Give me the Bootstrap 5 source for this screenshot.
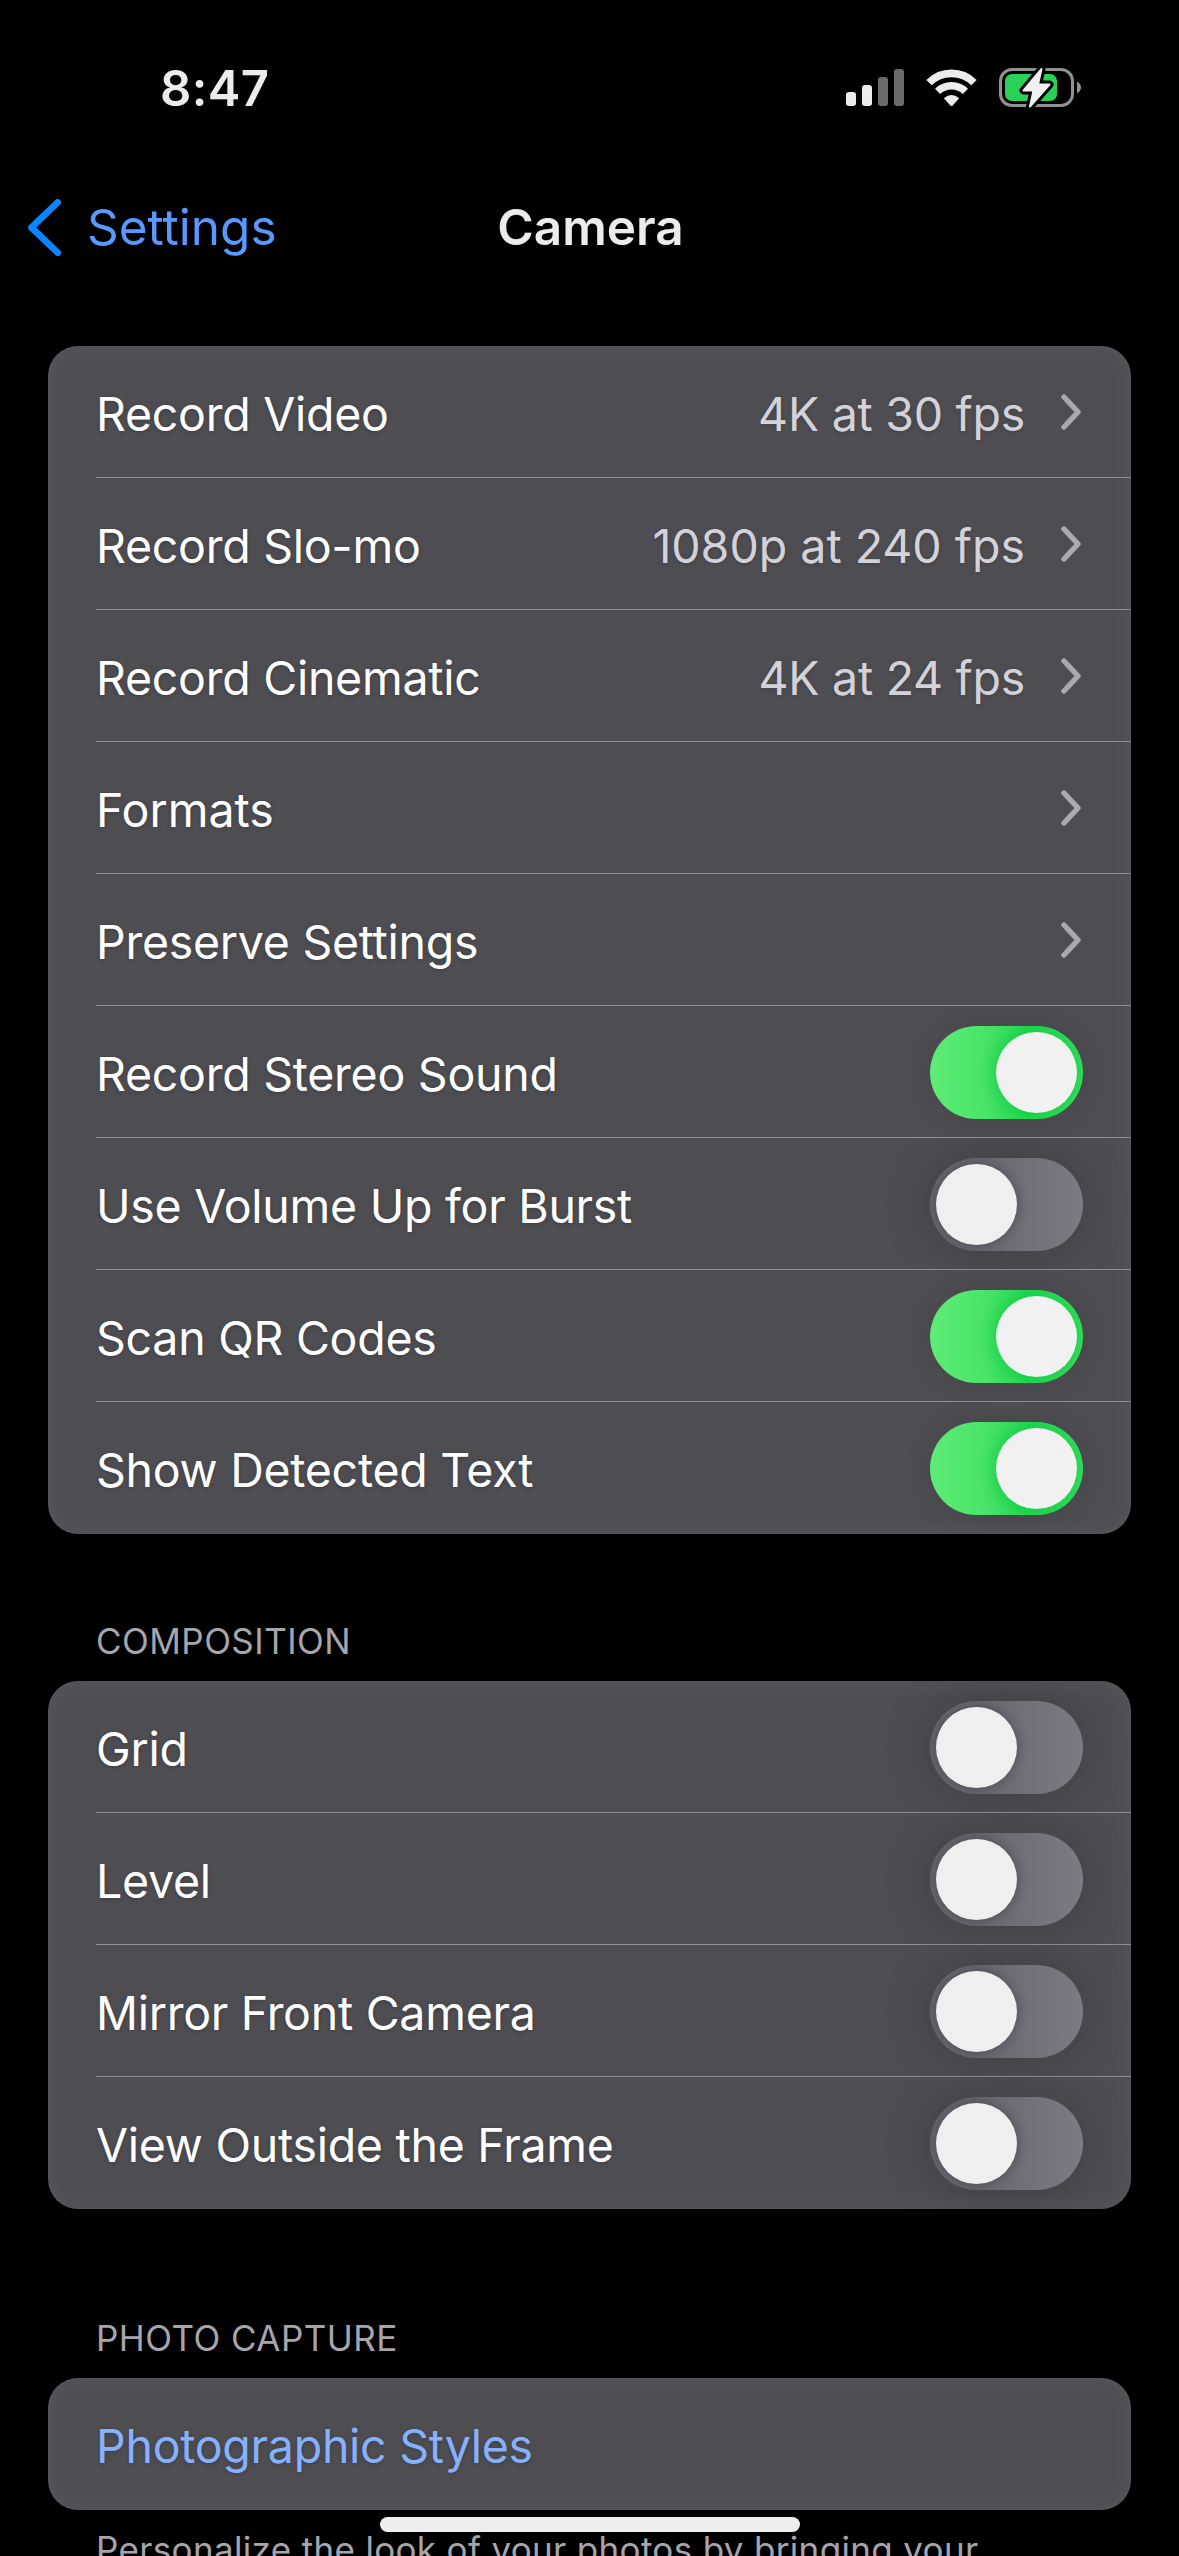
<!DOCTYPE html>
<html lang="en" data-bs-theme="dark">
<head>
<meta charset="utf-8">
<meta name="viewport" content="width=device-width, initial-scale=1">
<title>Camera</title>
<link rel="stylesheet" href="https://cdn.jsdelivr.net/npm/bootstrap@5.3.0/dist/css/bootstrap.min.css">
<style>
  body { background: #000; color: #fff; font-family: Inter, "Liberation Sans", sans-serif; }
  .phone { width: 1179px; height: 2556px; }
  svg { display: block; flex: none; }

  .status-row { height: 176px; padding: 0 98px 0 160px; }
  .clock { font-size: 49px; font-weight: 600; letter-spacing: .4px; color: #ececec; line-height: 1; }
  .status-icons { gap: 22px; }

  .title-row { height: 102px; padding: 0 28px; margin-bottom: 68px; font-size: 49.5px; line-height: 1; }
  .back-link { color: #5799ff; gap: 26px; }
  .back-link span { padding-top: 2px; }
  .page-title { font-weight: 600; color: #ececec; padding: 2px 0 0 2px; }

  .settings-group { margin: 0 48px; border-radius: 30px; overflow: hidden; position: relative;
    background: #4e4d52; --bs-list-group-bg: transparent; }
  .settings-group::after { content: ""; position: absolute; inset: 0; border-radius: inherit; pointer-events: none;
    box-shadow: inset 0 0 22px rgba(200, 200, 210, .09), inset 0 0 2px rgba(220, 220, 230, .08); }
  .setting { height: 132px; padding: 0 48px; border: 0; color: #fff; background: transparent;
    font-size: 46.5px; letter-spacing: -.27px; line-height: 1; overflow: hidden; }
  .setting:not(:last-child) { background: linear-gradient(#8e8d93, #8e8d93) 48px 100% / 100% 1px no-repeat; }
  .setting-name { padding-top: 4px; text-shadow: 0 1px 4px rgba(0, 0, 0, .22); }
  .setting-value { padding-top: 4px; color: #d4d2d9; margin-right: 36px; text-shadow: 0 1px 4px rgba(0, 0, 0, .18); }
  .wide { letter-spacing: 0; }
  .setting-link { color: #86b1ff; }
  .chevron { margin: 0 2px 0 0; }

  .settings-group .form-switch { padding: 0; margin: 0 0 0 auto; min-height: 0; }
  .form-switch .toggle.form-check-input { float: none; display: block; width: 153px; height: 93px; margin: 1px 0 0;
    padding: 6px; border: 0; border-radius: 46.5px; overflow: hidden;
    background: linear-gradient(90deg, #67676f 30%, #7b7b83 100%);
    box-shadow: 0 0 50px rgba(0, 0, 0, .2); }
  .toggle::before { content: ""; display: block; width: 81px; height: 81px; border-radius: 50%;
    background: #efefef; box-shadow: 0 0 12px rgba(20, 20, 28, .38); }
  .form-switch .toggle.form-check-input:checked { background: linear-gradient(90deg, #5eec76 0%, #49e468 38%, #26d954 65%, #3fe163 100%);
    box-shadow: 0 0 26px rgba(0, 0, 0, .13); }
  .toggle:checked::before { margin-left: 60px; background: #f1f1f1; box-shadow: 0 0 22px rgba(0, 195, 55, .85); }

  .group-label, .group-note { padding: 0 96px; font-size: 35px; line-height: 40px; color: #a6a5ac; }
  .group-label { height: 147px; padding-bottom: 20px; letter-spacing: .46px; }
  .group-label.tall { height: 169px; }
  .group-note { padding-top: 19px; letter-spacing: .34px; white-space: nowrap; }
  .home-bar { left: 380px; top: 2517px; width: 420px; height: 15px; border-radius: 8px; background: #eee; }
</style>
<script src="https://cdn.jsdelivr.net/npm/bootstrap@5.3.0/dist/js/bootstrap.bundle.min.js"></script>
</head>
<body>
<svg width="0" height="0" class="position-absolute" aria-hidden="true">
  <symbol id="chev" viewBox="0 0 20 36"><path d="M3 3 17 18 3 33" fill="none" stroke="#aaa9af" stroke-width="5.4" stroke-linecap="round" stroke-linejoin="round"/></symbol>
</svg>
<div class="phone position-relative overflow-hidden">
  <header>
    <div class="status-row d-flex align-items-center justify-content-between">
      <span class="clock">8:47</span>
      <div class="status-icons d-flex align-items-center">
        <svg width="58" height="38" viewBox="0 0 58 38">
          <rect x="0" y="23" width="10" height="14" rx="3" fill="#ededed"/>
          <rect x="16" y="16" width="10" height="21" rx="3" fill="#ededed"/>
          <rect x="32" y="8" width="10" height="29" rx="3" fill="#6b6b6b"/>
          <rect x="48" y="0" width="10" height="37" rx="3" fill="#6b6b6b"/>
        </svg>
        <svg width="51" height="38" viewBox="0 0 51 38">
          <g fill="none" stroke="#ededed">
            <path d="M3 13.6A32 32 0 0 1 48 13.6" stroke-width="7.6"/>
            <path d="M11.6 22.4A20 20 0 0 1 39.4 22.4" stroke-width="7.4"/>
          </g>
          <path d="M17.8 29.2Q25.5 22.8 33.2 29.2L26.7 36.4Q25.5 37.6 24.3 36.4Z" fill="#ededed"/>
        </svg>
        <svg width="82" height="42" viewBox="0 0 82 42">
          <rect x="1.5" y="2.5" width="72" height="36" rx="11.5" fill="none" stroke="#919191" stroke-width="3"/>
          <path d="M78 14.5Q82 17 82 20.5Q82 24 78 26.5Z" fill="#919191"/>
          <rect x="6" y="7" width="52" height="27" rx="7" fill="#2ad158"/>
          <path d="M42.5 2 24.500 23.500H34.500L31 39.500 50.500 17.500H39Z" fill="#f0f0f0" stroke="#000" stroke-width="8" stroke-linejoin="round"/>
          <path d="M42.500 2 24.500 23.500H34.500L31 39.500 50.500 17.500H39Z" fill="#f0f0f0" stroke="#f0f0f0" stroke-width="2" stroke-linejoin="round"/>
        </svg>
      </div>
    </div>
    <nav class="title-row row g-0 align-items-center flex-nowrap">
      <div class="col-4">
        <a href="#" class="back-link d-flex align-items-center text-decoration-none">
          <svg width="33" height="57" viewBox="0 0 33 57"><path d="M29.700 3.300 3.500 28.500 29.700 53.700" fill="none" stroke="#0a84ff" stroke-width="6.600" stroke-linecap="round" stroke-linejoin="round"/></svg>
          <span>Settings</span>
        </a>
      </div>
      <div class="col-4 text-center page-title">Camera</div>
      <div class="col-4"></div>
    </nav>
  </header>

  <main>
    <section class="list-group settings-group">
      <a href="#" class="list-group-item setting d-flex align-items-center"><span class="setting-name">Record Video</span><span class="setting-value ms-auto">4K at 30 fps</span><svg class="chevron" width="20" height="36"><use href="#chev"/></svg></a>
      <a href="#" class="list-group-item setting d-flex align-items-center"><span class="setting-name">Record Slo-mo</span><span class="setting-value wide ms-auto">1080p at 240 fps</span><svg class="chevron" width="20" height="36"><use href="#chev"/></svg></a>
      <a href="#" class="list-group-item setting d-flex align-items-center"><span class="setting-name">Record Cinematic</span><span class="setting-value ms-auto">4K at 24 fps</span><svg class="chevron" width="20" height="36"><use href="#chev"/></svg></a>
      <a href="#" class="list-group-item setting d-flex align-items-center"><span class="setting-name wide">Formats</span><svg class="chevron ms-auto" width="20" height="36"><use href="#chev"/></svg></a>
      <a href="#" class="list-group-item setting d-flex align-items-center"><span class="setting-name">Preserve Settings</span><svg class="chevron ms-auto" width="20" height="36"><use href="#chev"/></svg></a>
      <label class="list-group-item setting d-flex align-items-center"><span class="setting-name">Record Stereo Sound</span><span class="form-check form-switch"><input class="form-check-input toggle" type="checkbox" role="switch" checked></span></label>
      <label class="list-group-item setting d-flex align-items-center"><span class="setting-name">Use Volume Up for Burst</span><span class="form-check form-switch"><input class="form-check-input toggle" type="checkbox" role="switch"></span></label>
      <label class="list-group-item setting d-flex align-items-center"><span class="setting-name">Scan QR Codes</span><span class="form-check form-switch"><input class="form-check-input toggle" type="checkbox" role="switch" checked></span></label>
      <label class="list-group-item setting d-flex align-items-center"><span class="setting-name">Show Detected Text</span><span class="form-check form-switch"><input class="form-check-input toggle" type="checkbox" role="switch" checked></span></label>
    </section>

    <div class="group-label d-flex align-items-end">COMPOSITION</div>
    <section class="list-group settings-group">
      <label class="list-group-item setting d-flex align-items-center"><span class="setting-name">Grid</span><span class="form-check form-switch"><input class="form-check-input toggle" type="checkbox" role="switch"></span></label>
      <label class="list-group-item setting d-flex align-items-center"><span class="setting-name">Level</span><span class="form-check form-switch"><input class="form-check-input toggle" type="checkbox" role="switch"></span></label>
      <label class="list-group-item setting d-flex align-items-center"><span class="setting-name">Mirror Front Camera</span><span class="form-check form-switch"><input class="form-check-input toggle" type="checkbox" role="switch"></span></label>
      <label class="list-group-item setting d-flex align-items-center"><span class="setting-name">View Outside the Frame</span><span class="form-check form-switch"><input class="form-check-input toggle" type="checkbox" role="switch"></span></label>
    </section>

    <div class="group-label tall d-flex align-items-end">PHOTO CAPTURE</div>
    <section class="list-group settings-group">
      <a href="#" class="list-group-item setting d-flex align-items-center setting-link"><span class="setting-name">Photographic Styles</span></a>
    </section>
    <div class="group-note">Personalize the look of your photos by bringing your</div>
  </main>
  <div class="home-bar position-absolute"></div>
</div>
</body>
</html>
